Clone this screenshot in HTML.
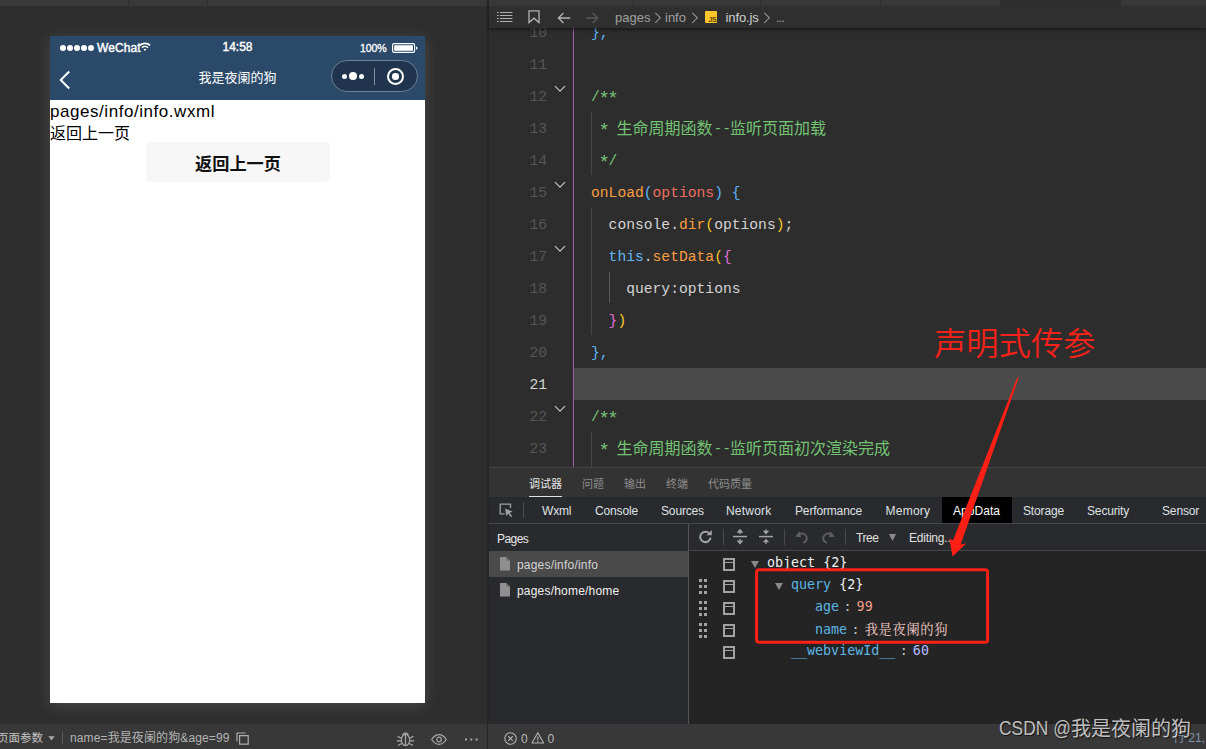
<!DOCTYPE html>
<html lang="zh">
<head>
<meta charset="utf-8">
<title>info.js</title>
<style>
*{box-sizing:border-box;margin:0;padding:0}
html,body{width:1206px;height:749px;overflow:hidden;background:#2e2e2e}
body{position:relative;font-family:"Liberation Sans","Noto Sans CJK SC",sans-serif;color:#ccc}
.abs{position:absolute}
/* top strip */
#topstrip{left:0;top:0;width:1206px;height:6px;background:#393939}
#topstrip i{position:absolute;top:0;width:1px;height:6px;background:#2c2c2c}
#topstrip b{position:absolute;left:1000px;top:0;width:120px;height:6px;background:#2e2e2e}
/* simulator */
#sim{left:0;top:6px;width:487px;height:718px;background:#2e2e2e}
#simdiv{left:487px;top:0;width:2px;height:749px;background:#252525}
#phone{left:50px;top:36px;width:375px;height:667px;background:#fff;box-shadow:0 3px 14px rgba(255,255,255,.13)}
#phead{left:0;top:0;width:375px;height:64px;background:#2b4a69;color:#fff}
#sigdots{left:10px;top:8.7px;height:7px;width:36px}
#sigdots i{float:left;width:6px;height:6px;border-radius:50%;background:#fff;margin-right:1px}
#carrier{left:47px;top:3.5px;font-size:12px;-webkit-text-stroke:.4px #fff;letter-spacing:.1px;line-height:16px}
#wifi{left:88.5px;top:6px}
#ptime{left:0;width:375px;text-align:center;top:3px;font-size:12px;-webkit-text-stroke:.4px #fff;line-height:16px}
#pbatt{right:38.5px;top:4px;font-size:10.6px;-webkit-text-stroke:.3px #fff;line-height:16px;letter-spacing:-.15px}
#batt{left:342px;top:7px}
#pback{left:9px;top:34px}
#ptitle{left:0;width:375px;text-align:center;top:32px;font-size:13px;line-height:20px;font-weight:400}
#capsule{left:281px;top:24px;width:87px;height:32px;border-radius:16px;background:#20344d;border:1px solid #6b7f95}
#capsule i{position:absolute;background:#fff;border-radius:50%}
#capsule .d1{left:10px;top:12.5px;width:5px;height:5px}
#capsule .d2{left:17px;top:11.3px;width:8px;height:8px}
#capsule .d3{left:27px;top:12.5px;width:5px;height:5px}
#capsule .sep{left:42px;top:7px;width:1px;height:17px;background:#7d8ea1;border-radius:0}
#capsule .ring{left:55px;top:7px;width:17px;height:17px;background:none;border:2px solid #fff}
#capsule .dot{left:60.2px;top:12.2px;width:6.6px;height:6.6px}
#pbody{left:0;top:64px;width:375px;color:#000;font-size:16px;line-height:21px}
#pl1{left:0;top:1px;font-size:17px;letter-spacing:.55px;line-height:21px;white-space:nowrap}
#pl2{left:0;top:23px;line-height:21px;white-space:nowrap}
#pbtn{left:96px;top:42px;width:184px;height:40px;line-height:45px;overflow:hidden;border-radius:4px;background:#f7f7f7;text-align:center;font-weight:bold;font-size:17.2px;color:#111}
/* editor */
#crumb{left:489px;top:6px;width:717px;height:22px;background:#2f2f2f;box-shadow:0 2px 3px rgba(0,0,0,.45);z-index:3;font-size:13px;color:#a0a0a0}
.ct{top:3px;line-height:17px;font-size:13px;white-space:nowrap}
.cv{top:5.5px}
#jsicon{left:216px;top:5px;width:12px;height:12px;background:#fbc62a;color:#5a4500;font-size:7px;font-weight:bold;line-height:17px;text-align:right;padding-right:.5px;letter-spacing:-.3px;border-radius:1px;overflow:hidden}
#code{left:489px;top:28px;width:717px;height:439px;background:#2d2d2d;overflow:hidden;font-family:"Liberation Mono","Noto Sans CJK SC",monospace;font-size:14.67px}
.ln{position:absolute;left:0;width:58px;text-align:right;color:#565656;height:32px;line-height:36px}
.cl{position:absolute;left:102px;height:32px;line-height:36px;white-space:pre;color:#d4d4d4}
.cj{font-size:16px;position:relative;left:-1px;top:.6px}
.as{font-size:19px;margin:0 -1.3px;position:relative;top:3.4px;line-height:0}
.ln.cur{color:#d6d6d6}
#curline{left:85px;top:340px;width:632px;height:32px;background:#4a4a4a}
#purple{left:84px;top:0;width:1px;height:439px;background:#9b5fa5}
.ig{position:absolute;width:1px;background:#474747}
.fold{left:65px}
.cm{color:#73c373}.fn{color:#fa9d42}.pm{color:#ef6e60}.th{color:#62b8f5}
.b1{color:#f5c922}.b2{color:#e070d8}.b3{color:#5cb3f7}
/* debugger */
#dbg{left:489px;top:467px;width:717px;height:257px;background:#242424;border-top:1px solid #444}
#ptabs{left:0;top:0;width:717px;height:29px;background:#333}
.pt{top:7.7px;font-size:11px;line-height:16px;color:#8c8c8c;white-space:nowrap}
.pt.on{color:#e6e6e6}
#ptul{left:40px;top:28px;width:33px;height:1px;background:#e0e0e0}
#dtabs{left:0;top:29px;width:717px;height:27px;background:#292a2d;border-bottom:1px solid #45474a}
.dt{top:6px;font-size:12px;letter-spacing:-.15px;line-height:16px;color:#dfe1e4;white-space:nowrap}
#dtact{left:453px;top:0;width:70px;height:26px;background:#000}
.vs{width:1px;background:#4a4a4a}
#pagesp{left:0;top:56px;width:199px;height:201px;background:#292a2d;font-size:12px;color:#d4d4d4}
#pgh{left:8px;top:7px;line-height:16px;font-size:12px;color:#e8e8e8;letter-spacing:-.55px}
.pgr{letter-spacing:.2px;left:0;width:199px;height:26px;line-height:26px;white-space:nowrap}
.pgr.sel{background:#4a4a4a}
.pgr svg{position:absolute;left:11px;top:6px}
.pgr span{position:absolute;left:28px;top:1.4px}
#treetb{left:199px;top:56px;width:518px;height:27px;background:#292a2d;border-left:1px solid #555;border-bottom:1px solid #454545;border-top:0}
#tsep{left:199px;top:83px;width:1px;height:174px;background:#555}
.tt{top:6px;font-size:12px;line-height:16px;color:#e0e0e0;white-space:nowrap}
#tree{left:0;top:-1px;width:717px;height:258px;font-family:"DejaVu Sans Mono","Noto Serif CJK SC",monospace;font-size:13.33px}
#tree .bx{left:234px}
#tree .gp{left:210px}
.tr{height:22px;line-height:22px;white-space:pre}
.tw{color:#f0f0f0}.tk{color:#5cb4e2}.tc{color:#c8c8c8;margin:0 5px 0 4.5px}.tn{color:#f5a08e}.ts{letter-spacing:.6px;color:#f5cdc8;font-family:"Noto Serif CJK SC",serif}.tp{color:#b4bcff}
/* status */
#status{left:0;top:724px;width:1206px;height:25px;background:#383838;overflow:hidden}
.st{top:5px;line-height:18px;font-size:12px;color:#b8b8b8;white-space:nowrap}
#stright{left:489px;top:0;width:717px;height:25px;background:#383838}
#wm{left:999px;top:716px;height:26px;line-height:26px;white-space:nowrap;color:rgba(255,255,255,.72);text-shadow:1px 1px 1px rgba(0,0,0,.7);z-index:20}
.wl{display:inline-block;font-size:20px;transform:scaleX(.87);transform-origin:0 50%;width:72px;position:relative;top:-1px}
.wc{font-size:20px}
</style>
</head>
<body>
<div id="topstrip" class="abs"><i style="left:128px"></i><i style="left:207px"></i><i style="left:633px"></i><i style="left:760px"></i><i style="left:880px"></i><b></b><i style="left:1120px"></i></div>
<div id="sim" class="abs"></div>
<div id="phone" class="abs">
  <div id="phead" class="abs">
    <div class="abs" id="sigdots"><i></i><i></i><i></i><i></i><i></i></div>
    <div class="abs" id="carrier">WeChat</div>
    <svg class="abs" id="wifi" width="12" height="9" viewBox="0 0 12 9"><path d="M0.9 3.4 A7.2 7.2 0 0 1 11.1 3.4" fill="none" stroke="#fff" stroke-width="1.7"/><path d="M2.9 5.7 A4.4 4.4 0 0 1 9.1 5.7" fill="none" stroke="#fff" stroke-width="1.5"/><path d="M4.6 7.4 a2 2 0 0 1 2.8 0 L6 9z" fill="#fff"/></svg>
    <div class="abs" id="ptime">14:58</div>
    <div class="abs" id="pbatt">100%</div>
    <svg class="abs" id="batt" width="26" height="10" viewBox="0 0 26 10"><rect x="0.6" y="0.6" width="22" height="8.8" rx="1.6" fill="none" stroke="#fff" stroke-width="1.2"/><rect x="2.2" y="2.2" width="18.8" height="5.6" rx="0.6" fill="#fff"/><path d="M24 3.4 a1.6 1.6 0 0 1 0 3.2z" fill="#fff"/></svg>
    <svg class="abs" id="pback" width="12" height="20" viewBox="0 0 12 20"><path d="M10.2 1.5 L1.8 10 L10.2 18.5" fill="none" stroke="#fff" stroke-width="2"/></svg>
    <div class="abs" id="ptitle">我是夜阑的狗</div>
    <div class="abs" id="capsule">
      <i class="d1"></i><i class="d2"></i><i class="d3"></i><i class="sep"></i><i class="ring"></i><i class="dot"></i>
    </div>
  </div>
  <div class="abs" id="pbody">
    <div class="abs" id="pl1">pages/info/info.wxml</div>
    <div class="abs" id="pl2">返回上一页</div>
    <div class="abs" id="pbtn">返回上一页</div>
  </div>
</div>
<div id="simdiv" class="abs"></div>
<div id="crumb" class="abs">
  <svg class="abs" style="left:8px;top:6px" width="16" height="10" viewBox="0 0 16 10"><g stroke="#b0b0b0" stroke-width="1"><path d="M0 0.5h1.6M3 0.5h12.4M0 3.5h1.6M3 3.5h12.4M0 6.5h1.6M3 6.5h12.4M0 9.5h1.6M3 9.5h12.4"/></g></svg>
  <svg class="abs" style="left:39px;top:4px" width="12" height="15" viewBox="0 0 12 15"><path d="M1 0.8h10v11.8l-5-4.4l-5 4.4z" fill="none" stroke="#b4b4b4" stroke-width="1.3"/></svg>
  <svg class="abs" style="left:68px;top:6px" width="14" height="12" viewBox="0 0 14 12"><path d="M13.2 6H1.6M6.4 1L1.4 6l5 5" fill="none" stroke="#b4b4b4" stroke-width="1.3"/></svg>
  <svg class="abs" style="left:96px;top:6px" width="14" height="12" viewBox="0 0 14 12"><path d="M0.8 6h11.6M7.6 1l5 5l-5 5" fill="none" stroke="#5a5a5a" stroke-width="1.3"/></svg>
  <span class="abs ct" style="left:126px">pages</span>
  <svg class="abs cv" style="left:165px" width="8" height="12" viewBox="0 0 8 12"><path d="M1.3 0.8L6.3 5.8L1.3 10.8" fill="none" stroke="#959595" stroke-width="1.1"/></svg>
  <span class="abs ct" style="left:176px">info</span>
  <svg class="abs cv" style="left:202px" width="8" height="12" viewBox="0 0 8 12"><path d="M1.3 0.8L6.3 5.8L1.3 10.8" fill="none" stroke="#959595" stroke-width="1.1"/></svg>
  <div class="abs" id="jsicon">JS</div>
  <span class="abs ct" style="left:236.5px;color:#d0d0d0;letter-spacing:-.1px">info.js</span>
  <svg class="abs cv" style="left:274px" width="8" height="12" viewBox="0 0 8 12"><path d="M1.3 0.8L6.3 5.8L1.3 10.8" fill="none" stroke="#959595" stroke-width="1.1"/></svg>
  <span class="abs ct" style="left:287px;letter-spacing:-1px">...</span>
</div>
<div id="code" class="abs">
<div class="abs" id="curline"></div>
<div class="abs" id="purple"></div>
<i class="ig" style="left:102px;top:84px;height:63px"></i>
<i class="ig" style="left:102px;top:180px;height:127px"></i>
<i class="ig" style="left:120px;top:244px;height:31px;background:#585858"></i>
<i class="ig" style="left:102px;top:404px;height:40px"></i>
<div class="ln" style="top:-13px">10</div>
<div class="cl" style="top:-13px"><span class="b3">},</span></div>
<div class="ln" style="top:19px">11</div>
<div class="ln" style="top:51px">12</div>
<div class="cl" style="top:51px"><span class="cm">/<span class="as">*</span><span class="as">*</span></span></div>
<div class="ln" style="top:83px">13</div>
<div class="cl" style="top:83px"><span class="cm"> <span class="as">*</span> <span class="cj">生命周期函数</span>--<span class="cj">监听页面加载</span></span></div>
<div class="ln" style="top:115px">14</div>
<div class="cl" style="top:115px"><span class="cm"> <span class="as">*</span>/</span></div>
<div class="ln" style="top:147px">15</div>
<div class="cl" style="top:147px"><span class="fn">onLoad</span><span class="b3">(</span><span class="pm">options</span><span class="b3">)</span> <span class="b3">{</span></div>
<div class="ln" style="top:179px">16</div>
<div class="cl" style="top:179px">  console.<span class="fn">dir</span><span class="b1">(</span>options<span class="b1">)</span>;</div>
<div class="ln" style="top:211px">17</div>
<div class="cl" style="top:211px">  <span class="th">this</span>.<span class="fn">setData</span><span class="b1">(</span><span class="b2">{</span></div>
<div class="ln" style="top:243px">18</div>
<div class="cl" style="top:243px">    query:options</div>
<div class="ln" style="top:275px">19</div>
<div class="cl" style="top:275px">  <span class="b2">}</span><span class="b1">)</span></div>
<div class="ln" style="top:307px">20</div>
<div class="cl" style="top:307px"><span class="b3">},</span></div>
<div class="ln cur" style="top:339px">21</div>
<div class="ln" style="top:371px">22</div>
<div class="cl" style="top:371px"><span class="cm">/<span class="as">*</span><span class="as">*</span></span></div>
<div class="ln" style="top:403px">23</div>
<div class="cl" style="top:403px"><span class="cm"> <span class="as">*</span> <span class="cj">生命周期函数</span>--<span class="cj">监听页面初次渲染完成</span></span></div>
<svg class="abs fold" style="top:57px" width="12" height="8" viewBox="0 0 12 8"><path d="M1 1.2 L6 6.2 L11 1.2" fill="none" stroke="#c5c5c5" stroke-width="1.2"/></svg>
<svg class="abs fold" style="top:153px" width="12" height="8" viewBox="0 0 12 8"><path d="M1 1.2 L6 6.2 L11 1.2" fill="none" stroke="#c5c5c5" stroke-width="1.2"/></svg>
<svg class="abs fold" style="top:217px" width="12" height="8" viewBox="0 0 12 8"><path d="M1 1.2 L6 6.2 L11 1.2" fill="none" stroke="#c5c5c5" stroke-width="1.2"/></svg>
<svg class="abs fold" style="top:377px" width="12" height="8" viewBox="0 0 12 8"><path d="M1 1.2 L6 6.2 L11 1.2" fill="none" stroke="#c5c5c5" stroke-width="1.2"/></svg>
</div>
<div id="dbg" class="abs">
  <div class="abs" id="ptabs">
    <span class="abs pt on" style="left:40px">调试器</span>
    <span class="abs pt" style="left:93px">问题</span>
    <span class="abs pt" style="left:135px">输出</span>
    <span class="abs pt" style="left:177px">终端</span>
    <span class="abs pt" style="left:219px">代码质量</span>
    <i class="abs" id="ptul"></i>
  </div>
  <div class="abs" id="dtabs">
    <svg class="abs" style="left:10px;top:6px" width="15" height="15" viewBox="0 0 15 15"><path d="M11.5 5V1.2H1.2v9.6H5.5" fill="none" stroke="#9aa0a6" stroke-width="1.3"/><path d="M6.2 5.4l7.6 3.3l-3.2 1.1l2.6 3.4l-1.3 1l-2.6-3.5l-2.2 2.4z" fill="#9aa0a6"/></svg>
    <i class="abs vs" style="left:34px;top:5px;height:16px"></i>
    <i class="abs" id="dtact"></i>
    <span class="abs dt" style="left:53px">Wxml</span>
    <span class="abs dt" style="left:106px">Console</span>
    <span class="abs dt" style="left:172px">Sources</span>
    <span class="abs dt" style="left:237px;letter-spacing:.2px">Network</span>
    <span class="abs dt" style="left:306px">Performance</span>
    <span class="abs dt" style="left:396.5px;letter-spacing:.25px">Memory</span>
    <span class="abs dt" style="left:464px;color:#fff;letter-spacing:.05px">AppData</span>
    <span class="abs dt" style="left:534px">Storage</span>
    <span class="abs dt" style="left:598px">Security</span>
    <span class="abs dt" style="left:673px">Sensor</span>
  </div>
  <div class="abs" id="pagesp">
    <div class="abs" id="pgh">Pages</div>
    <div class="abs pgr sel" style="top:27px"><svg width="10" height="14" viewBox="0 0 10 14"><path d="M0 0h6.4l3.6 3.6v10h-10z" fill="#8f8f8f"/><path d="M6.4 0v3.6h3.6z" fill="#666"/></svg><span>pages/info/info</span></div>
    <div class="abs pgr" style="top:53px"><svg width="10" height="14" viewBox="0 0 10 14"><path d="M0 0h6.4l3.6 3.6v10h-10z" fill="#8f8f8f"/><path d="M6.4 0v3.6h3.6z" fill="#666"/></svg><span style="color:#f0f0f0">pages/home/home</span></div>
  </div>
  <div class="abs" id="treetb">
    <svg class="abs" style="left:10px;top:5px" width="14" height="15" viewBox="0 0 14 15"><path d="M10.3 4.4A5.2 5.2 0 1 0 11.6 8.6" fill="none" stroke="#a4a4a4" stroke-width="2"/><path d="M7.6 6.2h5.2V1z" fill="#a4a4a4"/></svg>
    <i class="abs vs" style="left:34px;top:5px;height:16px"></i>
    <svg class="abs" style="left:44px;top:4px" width="14" height="17" viewBox="0 0 14 17"><g fill="#a4a4a4"><path d="M7 0.8l3.4 4h-6.8z"/><rect x="0" y="7.8" width="14" height="1.5"/><path d="M7 16.4l3.4-4h-6.8z"/><rect x="6.3" y="4.4" width="1.4" height="1.6"/><rect x="6.3" y="11" width="1.4" height="1.6"/></g></svg>
    <svg class="abs" style="left:70px;top:4px" width="14" height="17" viewBox="0 0 14 17"><g fill="#a4a4a4"><path d="M7 6.4l3.2-3.6h-6.4z"/><rect x="0" y="7.8" width="14" height="1.5"/><path d="M7 10.7l3.2 3.6h-6.4z"/><rect x="6.3" y="1.4" width="1.4" height="2"/><rect x="6.3" y="13.8" width="1.4" height="2"/></g></svg>
    <i class="abs vs" style="left:95px;top:5px;height:16px"></i>
    <svg class="abs" style="left:106px;top:6px" width="14" height="14" viewBox="0 0 14 14"><path d="M3 4.6 C6 2.6 10.5 3.4 11.6 7 C12.3 9.6 10.6 11.8 8 12.8" fill="none" stroke="#5e5e5e" stroke-width="1.9"/><path d="M0.2 6.8l4.4-5.6l1.6 6z" fill="#5e5e5e"/></svg>
    <svg class="abs" style="left:132px;top:6px" width="14" height="14" viewBox="0 0 14 14"><path d="M11 4.6 C8 2.6 3.5 3.4 2.4 7 C1.7 9.6 3.4 11.8 6 12.8" fill="none" stroke="#5e5e5e" stroke-width="1.9"/><path d="M13.8 6.8l-4.4-5.6l-1.6 6z" fill="#5e5e5e"/></svg>
    <i class="abs vs" style="left:156px;top:5px;height:16px"></i>
    <span class="abs tt" style="left:167px;letter-spacing:-.45px">Tree</span>
    <svg class="abs" style="left:200px;top:10px" width="7" height="7" viewBox="0 0 7 7"><path d="M0 0h7l-3.5 7z" fill="#8a8a8a"/></svg>
    <span class="abs tt" style="left:220px;letter-spacing:-.2px">Editing...</span>
  </div>
  <i class="abs" id="tsep"></i>
  <div class="abs" id="tree">
<svg class="abs bx" style="top:91px" width="12" height="13" viewBox="0 0 12 13"><path d="M1 1h10v11h-10z" fill="none" stroke="#a2a2a2" stroke-width="2"/><rect x="1" y="4" width="10" height="1" fill="#a2a2a2"/></svg>
<svg class="abs bx" style="top:113px" width="12" height="13" viewBox="0 0 12 13"><path d="M1 1h10v11h-10z" fill="none" stroke="#a2a2a2" stroke-width="2"/><rect x="1" y="4" width="10" height="1" fill="#a2a2a2"/></svg>
<svg class="abs gp" style="top:112px" width="8" height="15" viewBox="0 0 8 15"><g fill="#a2a2a2"><rect x="0" y="0" width="3" height="3"/><rect x="5" y="0" width="3" height="3"/><rect x="0" y="6" width="3" height="3"/><rect x="5" y="6" width="3" height="3"/><rect x="0" y="12" width="3" height="3"/><rect x="5" y="12" width="3" height="3"/></g></svg>
<svg class="abs bx" style="top:135px" width="12" height="13" viewBox="0 0 12 13"><path d="M1 1h10v11h-10z" fill="none" stroke="#a2a2a2" stroke-width="2"/><rect x="1" y="4" width="10" height="1" fill="#a2a2a2"/></svg>
<svg class="abs gp" style="top:134px" width="8" height="15" viewBox="0 0 8 15"><g fill="#a2a2a2"><rect x="0" y="0" width="3" height="3"/><rect x="5" y="0" width="3" height="3"/><rect x="0" y="6" width="3" height="3"/><rect x="5" y="6" width="3" height="3"/><rect x="0" y="12" width="3" height="3"/><rect x="5" y="12" width="3" height="3"/></g></svg>
<svg class="abs bx" style="top:157px" width="12" height="13" viewBox="0 0 12 13"><path d="M1 1h10v11h-10z" fill="none" stroke="#a2a2a2" stroke-width="2"/><rect x="1" y="4" width="10" height="1" fill="#a2a2a2"/></svg>
<svg class="abs gp" style="top:156px" width="8" height="15" viewBox="0 0 8 15"><g fill="#a2a2a2"><rect x="0" y="0" width="3" height="3"/><rect x="5" y="0" width="3" height="3"/><rect x="0" y="6" width="3" height="3"/><rect x="5" y="6" width="3" height="3"/><rect x="0" y="12" width="3" height="3"/><rect x="5" y="12" width="3" height="3"/></g></svg>
<svg class="abs bx" style="top:179px" width="12" height="13" viewBox="0 0 12 13"><path d="M1 1h10v11h-10z" fill="none" stroke="#a2a2a2" stroke-width="2"/><rect x="1" y="4" width="10" height="1" fill="#a2a2a2"/></svg>
<svg class="abs" style="left:262.4px;top:94px" width="8" height="7" viewBox="0 0 8 7"><path d="M0 0h8l-4 7z" fill="#8a8a8a"/></svg>
<svg class="abs" style="left:286.4px;top:116px" width="8" height="7" viewBox="0 0 8 7"><path d="M0 0h8l-4 7z" fill="#8a8a8a"/></svg>
<div class="abs tr" style="left:278px;top:84.5px"><span class="tw">object {2}</span></div>
<div class="abs tr" style="left:302px;top:106.5px"><span class="tk">query</span> <span class="tw">{2}</span></div>
<div class="abs tr" style="left:326px;top:128.5px"><span class="tk">age</span><span class="tc">:</span><span class="tn">99</span></div>
<div class="abs tr" style="left:326px;top:150.5px"><span class="tk">name</span><span class="tc">:</span><span class="ts">我是夜阑的狗</span></div>
<div class="abs tr" style="left:302px;top:172.5px"><span class="tk">__webviewId__</span><span class="tc">:</span><span class="tp">60</span></div>
  </div>
</div>
<svg class="abs" id="anno" width="1206" height="749" viewBox="0 0 1206 749" style="left:0;top:0;z-index:10;pointer-events:none">
  <rect x="756.6" y="569.7" width="231" height="72.6" rx="2.5" ry="2.5" fill="none" stroke="#fb2016" stroke-width="3"/>
  <path d="M1017.4 377.2 L1018.8 377.4 L960.7 544.5 L966.2 543.6 L952.5 556.6 L949.3 538.3 L953 540.4 Z" fill="#ff1f14"/>
  <text x="934" y="355" font-family="'Liberation Sans','Noto Sans CJK SC',sans-serif" font-size="32.3" font-weight="350" fill="#f5221a">声明式传参</text>
</svg>
<div id="status" class="abs">
  <span class="abs st" style="left:-3px;font-size:11.5px;color:#c4c4c4">页面参数</span>
  <svg class="abs" style="left:48px;top:12px" width="7" height="5" viewBox="0 0 7 5"><path d="M0.3 0.3h6.4l-3.2 4.2z" fill="#a8a8a8"/></svg>
  <i class="abs" style="left:62px;top:8px;width:1px;height:12px;background:#5a5a5a"></i>
  <span class="abs st" style="left:70px;color:#b4b4b4;letter-spacing:.12px">name=我是夜阑的狗&amp;age=99</span>
  <svg class="abs" style="left:236px;top:8px" width="13" height="13" viewBox="0 0 13 13"><path d="M3.6 3.6h8.6v8.6h-8.6z" fill="none" stroke="#b0b0b0" stroke-width="1.2"/><path d="M1 9.6V1h8.6" fill="none" stroke="#b0b0b0" stroke-width="1.2"/></svg>
  <svg class="abs" style="left:396px;top:7px" width="19" height="16" viewBox="0 0 19 16"><g fill="none" stroke="#a8a8a8" stroke-width="1.2"><ellipse cx="9.5" cy="9" rx="4.2" ry="5.6"/><path d="M9.5 3.6v11M6.6 4.2a3 3 0 0 1 5.8 0M5.4 7.2L1.6 5.4M5.3 9.8H0.8M5.8 12.4L2 14.6M13.6 7.2l3.8-1.8M13.7 9.8h4.5M13.2 12.4l3.8 2.2"/></g></svg>
  <svg class="abs" style="left:431px;top:10px" width="16" height="11" viewBox="0 0 16 11"><path d="M0.7 5.5C3 1.9 5.4 0.7 8 0.7s5 1.2 7.3 4.8C13 9.1 10.6 10.3 8 10.3S3 9.1 0.7 5.5z" fill="none" stroke="#a8a8a8" stroke-width="1.2"/><circle cx="8" cy="5.5" r="2.3" fill="none" stroke="#a8a8a8" stroke-width="1.2"/></svg>
  <svg class="abs" style="left:465px;top:14px" width="13" height="3" viewBox="0 0 13 3"><g fill="#a8a8a8"><rect x="0" y="0.5" width="2" height="2"/><rect x="5.3" y="0.5" width="2" height="2"/><rect x="10.6" y="0.5" width="2" height="2"/></g></svg>
  <i class="abs" style="left:487px;top:0;width:1px;height:25px;background:#262626;z-index:2"></i>
  <div class="abs" id="stright">
    <svg class="abs" style="left:15px;top:8px" width="13" height="13" viewBox="0 0 13 13"><circle cx="6.5" cy="6.5" r="5.7" fill="none" stroke="#b4b4b4" stroke-width="1.1"/><path d="M4.2 4.2l4.6 4.6M8.8 4.2L4.2 8.8" stroke="#b4b4b4" stroke-width="1.1"/></svg>
    <span class="abs st" style="left:32px;top:6px;font-size:12px">0</span>
    <svg class="abs" style="left:42px;top:8px" width="14" height="13" viewBox="0 0 14 13"><path d="M6.8 0.8L12.6 11H1z" fill="none" stroke="#b4b4b4" stroke-width="1.1" stroke-linejoin="round"/><path d="M6.8 4.4v3.6M6.8 8.8v1.2" stroke="#b4b4b4" stroke-width="1.1"/></svg>
    <span class="abs st" style="left:58.5px;top:6px;font-size:12px">0</span>
    <span class="abs st" style="left:684px;color:#7f93a8">行 21, 列 1</span>
  </div>
</div>
<div class="abs" id="wm"><span class="wl">CSDN @</span><span class="wc">我是夜阑的狗</span></div>
</body>
</html>
